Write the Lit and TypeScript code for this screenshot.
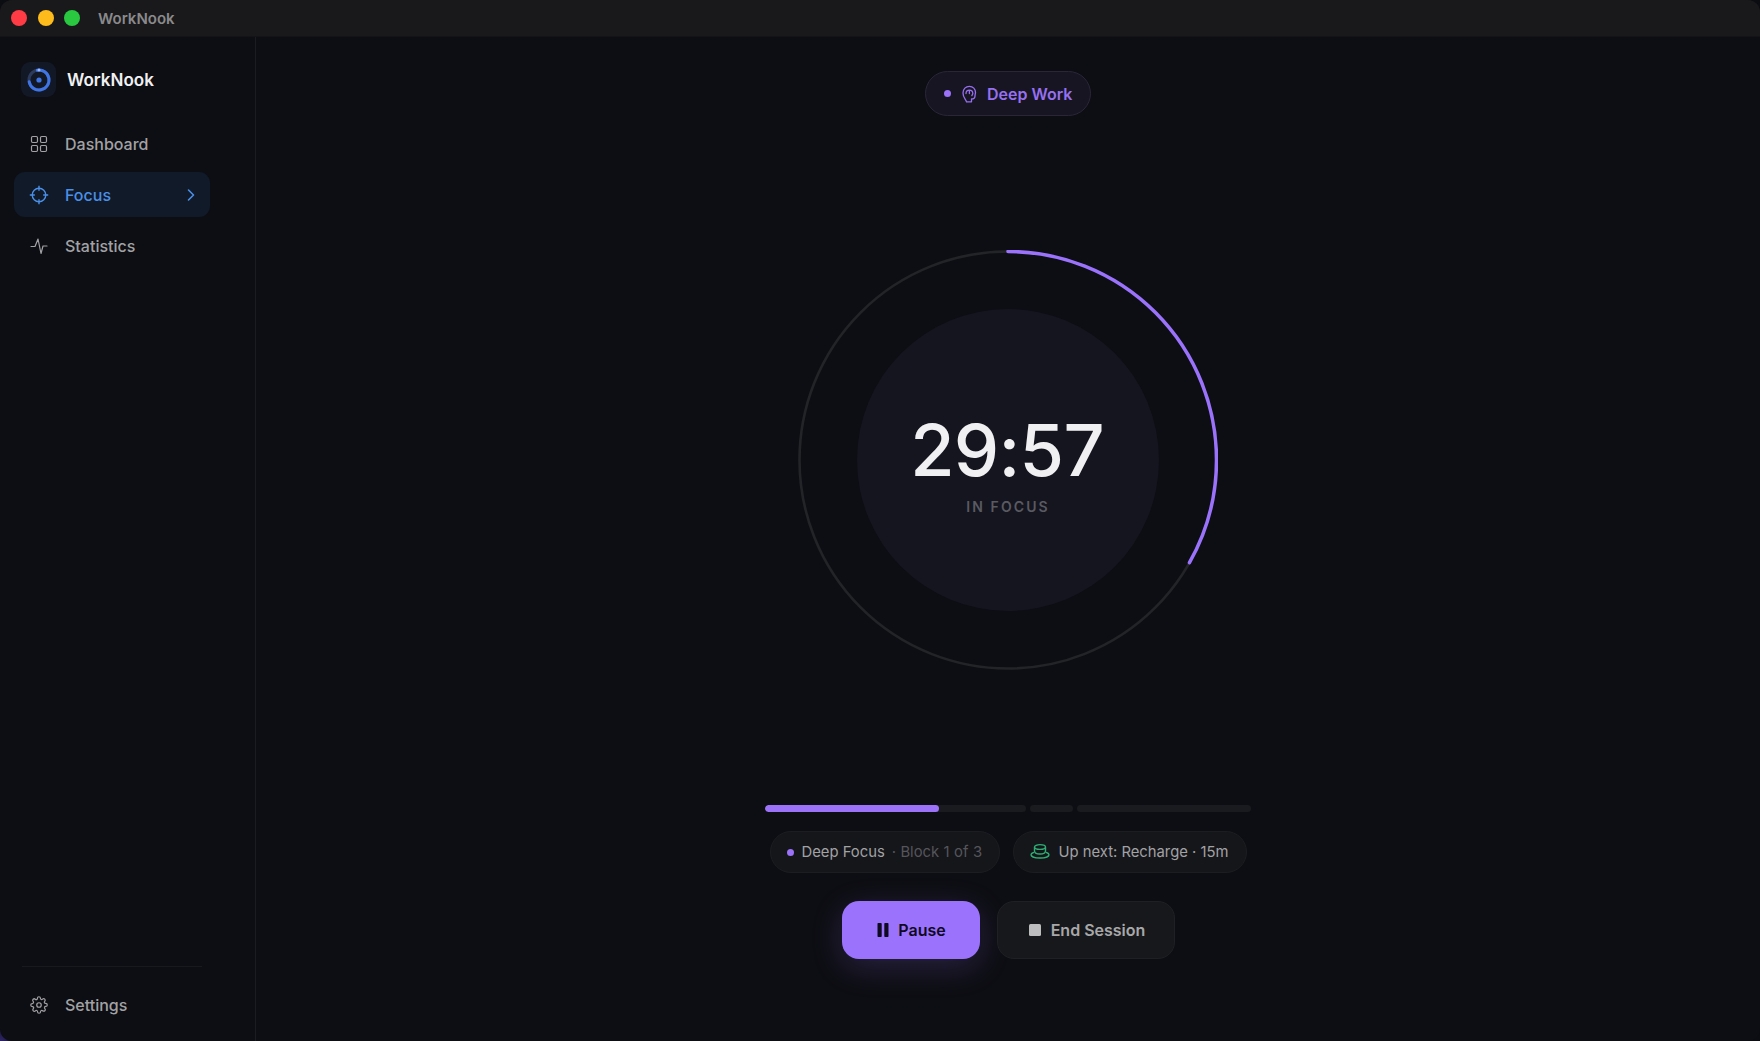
import { LitElement, html, css } from "lit";
import { customElement } from "lit/decorators.js";

@customElement("app-root")
export class AppRoot extends LitElement {
  static styles = css`
    :host { display: block; width: 1760px; height: 1041px; overflow: hidden; background: radial-gradient(circle at 0 100%, #2e2468, #0c0d12 22px); font-family: Inter, "Liberation Sans", sans-serif; color: #aaa; }
    * { box-sizing: border-box; }
    svg { display: block; flex: none; }
    .window { height: 1041px; display: flex; flex-direction: column; border-radius: 12px; overflow: hidden; background: #0d0e13; }
    .titlebar { height: 37px; flex: none; background: #19191b; display: flex; align-items: center; padding-left: 11px; gap: 10.5px; border-bottom: 1px solid #141416; }
    .light { width: 16px; height: 16px; border-radius: 50%; }
    .red { background: #ff3b45; } .yellow { background: #febc1c; } .green { background: #2ac840; }
    .wintitle { margin-left: 7.5px; font-size: 15px; font-weight: 600; color: #8a8a8c; }
    .body { flex: 1; display: flex; min-height: 0; }
    .side { width: 256px; flex: none; border-right: 1px solid #1b1c20; padding: 25px 0 0 14px; display: flex; flex-direction: column; }
    .brand { display: flex; align-items: center; gap: 11px; padding-left: 7px; height: 35px; }
    .logo { width: 35px; height: 35px; border-radius: 9px; background: #121826; display: flex; align-items: center; justify-content: center; }
    .brandname { font-size: 17px; font-weight: 600; color: #f0f0f2; }
    nav { margin-top: 24px; display: flex; flex-direction: column; gap: 6px; width: 196px; }
    .item { height: 45px; display: flex; align-items: center; gap: 17px; padding-left: 16px; padding-right: 13px; font-size: 16px; font-weight: 500; color: #a2a2a5; border-radius: 11px; }
    .item.on { background: #111a28; color: #4a8fe8; }
    .item .chev { margin-left: auto; }
    .bottom { margin-top: auto; padding-bottom: 14px; }
    .rule { height: 1px; width: 180px; margin-left: 8px; background: #18191c; margin-bottom: 15px; }
    main { flex: 1; display: flex; flex-direction: column; align-items: center; padding-top: 34px; position: relative; }
    .pill { height: 45px; width: 166px; border: 1px solid #2a2638; border-radius: 23px; background: #171522; display: flex; align-items: center; gap: 9px; padding-left: 18px; color: #9670f0; font-size: 16px; font-weight: 600; }
    .dot { width: 7px; height: 7px; border-radius: 50%; background: #9b72f8; flex: none; }
    .ringwrap { margin-top: 134px; width: 420px; height: 420px; display: grid; place-items: center; position: relative; }
    .ringsvg { position: absolute; inset: 0; }
    .inner { width: 302px; height: 302px; border-radius: 50%; background: #15151f; display: flex; flex-direction: column; align-items: center; justify-content: center; position: relative; }
    .time { font-size: 72px; line-height: 72px; font-weight: 500; color: #f0f0f2; margin-top: 8px; margin-left: -2px; letter-spacing: -0.7px; }
    .label { margin-top: 12px; font-size: 14px; font-weight: 600; letter-spacing: 2.1px; color: #5a5a62; }
    .segs { margin-top: 135px; display: flex; gap: 4px; width: 486px; height: 7px; }
    .seg { height: 7px; border-radius: 3.5px; background: #1a1b1f; overflow: hidden; }
    .fill { height: 100%; background: #9b72f8; border-radius: 3.5px; }
    .chips { margin-top: 19px; display: flex; gap: 13px; }
    .chip { height: 42px; border-radius: 21px; border: 1px solid #1c1d21; background: #15161a; display: flex; align-items: center; font-size: 14.8px; color: #a2a2a5; }
    .c1 { width: 230px; padding-left: 16px; gap: 8px; }
    .c2 { width: 234px; padding-left: 16px; gap: 9px; }
    .dim { color: #55555b; margin-left: -1px; word-spacing: 0.3px; }
    .btns { margin-top: 28px; display: flex; gap: 17px; }
    .btn { height: 58px; border-radius: 17px; display: flex; align-items: center; justify-content: center; font-size: 16px; font-weight: 600; gap: 9px; }
    .pause { width: 138px; padding-left: 2px; background: #9b72fc; color: #0f0a22; box-shadow: 0 8px 32px rgba(155,114,252,.2); }
    .end { width: 178px; padding-left: 3px; background: #17181b; border: 1px solid #1f2024; color: #a8a8aa; gap: 10px; }
  `;

  render() {
    const stroke = 'currentColor';
    return html`<div class="window">
      <div class="titlebar">
        <div class="light red"></div><div class="light yellow"></div><div class="light green"></div>
        <div class="wintitle">WorkNook</div>
      </div>
      <div class="body">
        <aside class="side">
          <div class="brand">
            <div class="logo"><svg width="26" height="26" viewBox="0 0 26 26" fill="none">
              <circle cx="13" cy="13" r="10" stroke="#2c3a5c" stroke-width="3"/>
              <path d="M13 3a10 10 0 1 1-10 10" stroke="#3f74e4" stroke-width="3" stroke-linecap="round" transform="rotate(-10 13 13)"/>
              <path d="M13 3v0" stroke="#9db8f0" stroke-width="3" stroke-linecap="round"/>
              <circle cx="13" cy="13" r="2.6" fill="#3f74e4"/></svg></div>
            <div class="brandname">WorkNook</div>
          </div>
          <nav>
            <div class="item"><svg width="18" height="18" viewBox="0 0 18 18" fill="none" stroke="${stroke}" stroke-width="1.2"><rect x="1.5" y="1.5" width="6" height="6" rx="1.2"/><rect x="10.5" y="1.5" width="6" height="6" rx="1.2"/><rect x="1.5" y="10.5" width="6" height="6" rx="1.2"/><rect x="10.5" y="10.5" width="6" height="6" rx="1.2"/></svg>Dashboard</div>
            <div class="item on"><svg width="20" height="20" viewBox="0 0 20 20" fill="none" stroke="${stroke}" stroke-width="1.4" style="margin-left:-1px;margin-right:-1px"><circle cx="10" cy="10" r="6.8"/><path d="M10 .8v5M10 14.2v5M.8 10h5M14.2 10h5"/></svg>Focus<svg class="chev" width="12" height="14" viewBox="0 0 12 14" fill="none" stroke="${stroke}" stroke-width="1.6" stroke-linecap="round" stroke-linejoin="round"><path d="M3.5 2l5 5-5 5"/></svg></div>
            <div class="item"><svg width="18" height="18" viewBox="0 0 18 18" fill="none" stroke="${stroke}" stroke-width="1.2" stroke-linecap="round" stroke-linejoin="round"><path d="M1 9.5h4L8 2l3 14.5L13 9h4"/></svg>Statistics</div>
          </nav>
          <div class="bottom">
            <div class="rule"></div>
            <div class="item"><svg width="18" height="18" viewBox="0 0 24 24" fill="none" stroke="${stroke}" stroke-width="1.6" stroke-linecap="round" stroke-linejoin="round"><circle cx="12" cy="12" r="3"/><path d="M19.4 15a1.65 1.65 0 0 0 .33 1.82l.06.06a2 2 0 1 1-2.83 2.83l-.06-.06a1.65 1.65 0 0 0-2.82 1.17V21a2 2 0 1 1-4 0v-.09a1.65 1.65 0 0 0-2.82-1.17l-.06.06a2 2 0 1 1-2.83-2.83l.06-.06a1.65 1.65 0 0 0-1.17-2.82H3a2 2 0 1 1 0-4h.09A1.65 1.65 0 0 0 4.26 7.27l-.06-.06a2 2 0 1 1 2.83-2.83l.06.06A1.65 1.65 0 0 0 9.91 3.27V3a2 2 0 1 1 4 0v.09a1.65 1.65 0 0 0 2.82 1.17l.06-.06a2 2 0 1 1 2.83 2.83l-.06.06a1.65 1.65 0 0 0 1.17 2.82H21a2 2 0 1 1 0 4h-.09a1.65 1.65 0 0 0-1.51 1.09z"/></svg>Settings</div>
          </div>
        </aside>
        <main>
          <div class="pill"><span class="dot"></span>
            <svg width="18" height="18" viewBox="0 0 18 18" fill="none" stroke="currentColor" stroke-width="1.3" stroke-linecap="round" stroke-linejoin="round"><path d="M6.5 16.8C6 14.5 3 13 3 8 3 4 5.8 1.3 9.4 1.3c3.600 0 6.100 2.700 6.100 6.200 0 1-.5 2-.5 3.500 0 2-1.500 3-3.500 3v2.800z"/><path d="M6 8.500a3.400 3.400 0 0 1 6.800 0c0 1-.9 1.200-.9 2.200M9.400 5.800v2.700"/></svg>
            <span>Deep Work</span></div>
          <div class="ringwrap">
            <svg class="ringsvg" width="420" height="420" viewBox="0 0 420 420" fill="none">
              <circle cx="210" cy="210" r="208.5" stroke="#232427" stroke-width="2.6"/>
              <circle cx="210" cy="210" r="208.5" stroke="#9b72fc" stroke-width="3.5" stroke-linecap="round" pathLength="100" stroke-dasharray="33.2 100" transform="rotate(-90 210 210)"/>
            </svg>
            <div class="inner"><div class="time">29:57</div><div class="label">IN FOCUS</div></div>
          </div>
          <div class="segs">
            <div class="seg" style="width:261px"><div class="fill" style="width:174px"></div></div>
            <div class="seg" style="width:43px"></div>
            <div class="seg" style="width:174px"></div>
          </div>
          <div class="chips">
            <div class="chip c1"><span class="dot"></span><span>Deep Focus</span><span class="dim">· Block 1 of 3</span></div>
            <div class="chip c2"><svg width="20" height="18" viewBox="0 0 20 18" fill="none" stroke="#2fae74" stroke-width="1.4" stroke-linecap="round"><ellipse cx="10" cy="4" rx="5.5" ry="2.4"/><path d="M4.5 4.500v3.200C4.500 10 7 11 10 11s5.500-1 5.500-3.300V4.500"/><path d="M3.500 9.500C2 10 1 10.800 1 11.800 1 13.600 5 15 10 15s9-1.400 9-3.200c0-1-1-1.800-2.500-2.300"/></svg><span>Up next: Recharge · 15m</span></div>
          </div>
          <div class="btns">
            <div class="btn pause"><svg width="12" height="14" viewBox="0 0 12 14" fill="currentColor"><rect x=".5" y="0" width="4.200" height="14" rx=".8"/><rect x="7.300" y="0" width="4.200" height="14" rx=".8"/></svg>Pause</div>
            <div class="btn end"><svg width="12" height="12" viewBox="0 0 12 12"><rect width="12" height="12" rx="1.500" fill="#bdbdbf"/></svg>End Session</div>
          </div>
        </main>
      </div>
    </div>`;
  }
}
